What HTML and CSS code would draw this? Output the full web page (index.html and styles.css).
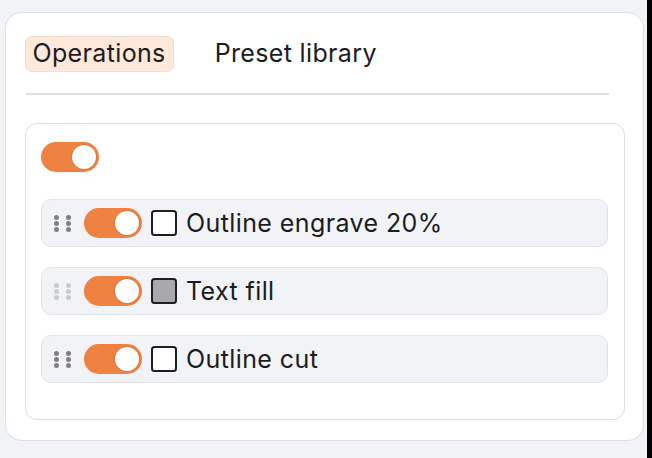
FILE: index.html
```html
<!DOCTYPE html>
<html>
<head>
<meta charset="utf-8">
<link rel="stylesheet" href="styles.css">
</head>
<body>
<div class="page">
  <div class="card">
    <div class="tabs">
      <div class="tab active">Operations</div>
      <div class="tab">Preset library</div>
    </div>
    <div class="divider"></div>
    <div class="panel">
      <div class="master">
        <span class="toggle on"><span class="knob"></span></span>
      </div>
      <div class="rows">
        <div class="row">
          <span class="handle"><i></i><i></i><i></i><i></i><i></i><i></i></span>
          <span class="toggle on"><span class="knob"></span></span>
          <span class="swatch"></span>
          <span class="label">Outline engrave 20%</span>
        </div>
        <div class="row">
          <span class="handle faint"><i></i><i></i><i></i><i></i><i></i><i></i></span>
          <span class="toggle on"><span class="knob"></span></span>
          <span class="swatch filled"></span>
          <span class="label">Text fill</span>
        </div>
        <div class="row">
          <span class="handle"><i></i><i></i><i></i><i></i><i></i><i></i></span>
          <span class="toggle on"><span class="knob"></span></span>
          <span class="swatch"></span>
          <span class="label">Outline cut</span>
        </div>
      </div>
    </div>
  </div>
</div>
</body>
</html>
```
FILE: styles.css
```css
html, body {
  margin: 0;
  padding: 0;
  background: #000;
}
.page {
  width: 647px;
  height: 458px;
  background: #f2f3f7;
  box-sizing: border-box;
  padding: 12px 0 0 5px;
  font-family: "Inter", "Noto Sans", sans-serif;
  color: #1c1c1e;
}
.card {
  width: 639px;
  height: 429px;
  box-sizing: border-box;
  background: #fff;
  border: 1.5px solid #dcdde2;
  border-radius: 16px;
  padding: 22.5px 18.5px 0 18.5px;
}
.tabs {
  display: flex;
  gap: 33px;
  height: 36px;
}
.tab {
  height: 36px;
  box-sizing: border-box;
  padding: 0 7px;
  display: flex;
  align-items: center;
  font-size: 25px;
  line-height: 1;
  border: 1px solid transparent;
  border-radius: 7px;
  letter-spacing: 0.35px;
}
.tab.active {
  background: #fde8da;
  border-color: #f2dccd;
}
.divider {
  height: 2px;
  background: #dedfe3;
  margin: 21px 16px 0 1px;
}
.panel {
  margin-top: 28px;
  height: 297px;
  box-sizing: border-box;
  border: 1.5px solid #dfe0e5;
  border-radius: 12px;
  padding: 18.5px 15.5px 0 15.5px;
}
.master {
  height: 30px;
  display: flex;
}
.rows {
  margin-top: 27px;
  display: flex;
  flex-direction: column;
  gap: 20px;
}
.row {
  height: 48px;
  box-sizing: border-box;
  background: #f2f3f7;
  border: 1.5px solid #e2e3e8;
  border-radius: 10px;
  display: flex;
  align-items: center;
  padding-left: 12px;
}
.handle {
  display: grid;
  grid-template-columns: 5px 5px;
  column-gap: 7px;
  row-gap: 1px;
  width: 17px;
  margin-right: 13px;
}
.handle i {
  display: block;
  width: 5px;
  height: 5px;
  border-radius: 50%;
  background: #7f7f84;
}
.handle.faint i {
  background: #cbcbcf;
}
.toggle {
  width: 58px;
  height: 30px;
  border-radius: 15px;
  background: #ef8141;
  display: flex;
  align-items: center;
  justify-content: flex-end;
  padding-right: 3px;
  box-sizing: border-box;
  flex: none;
}
.knob {
  width: 24px;
  height: 24px;
  border-radius: 50%;
  background: #fff;
  box-shadow: 0 0 0 1px #e0783c;
}
.swatch {
  width: 26px;
  height: 26px;
  box-sizing: border-box;
  border: 2.5px solid #1f1f22;
  border-radius: 3.5px;
  margin-left: 9px;
  background: #fff;
  flex: none;
}
.swatch.filled {
  background: #a9a9ab;
}
.label {
  margin-left: 9px;
  font-size: 25px;
  line-height: 1;
  letter-spacing: 0.4px;
}
```
